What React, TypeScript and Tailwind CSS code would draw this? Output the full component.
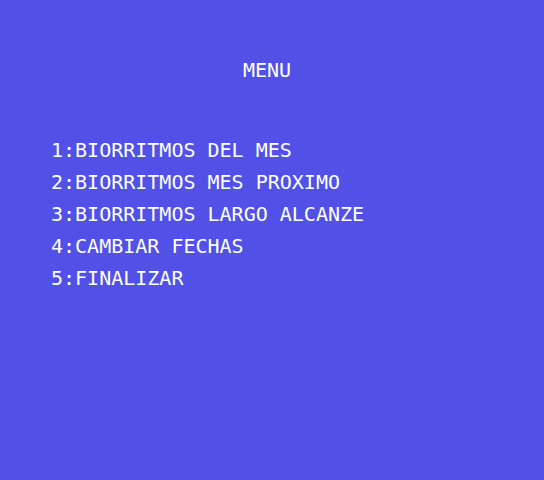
import React from 'react';

const App = () => {
  const options = [
    '1:BIORRITMOS DEL MES',
    '2:BIORRITMOS MES PROXIMO',
    '3:BIORRITMOS LARGO ALCANZE',
    '4:CAMBIAR FECHAS',
    '5:FINALIZAR',
  ];

  return (
    <div
      className="w-[544px] h-[480px] bg-[#5151e8] text-white overflow-hidden pt-[54px]"
      style={{ fontFamily: '"DejaVu Sans Mono", "Liberation Mono", monospace' }}
    >
      {/* Title */}
      <div className="pl-[243px] text-[20px] leading-[32px] whitespace-pre">MENU</div>

      {/* Options */}
      <div className="mt-[48px] pl-[51px] flex flex-col">
        {options.map((option) => (
          <div key={option} className="text-[20px] leading-[32px] whitespace-pre">
            {option}
          </div>
        ))}
      </div>
    </div>
  );
};

export default App;
